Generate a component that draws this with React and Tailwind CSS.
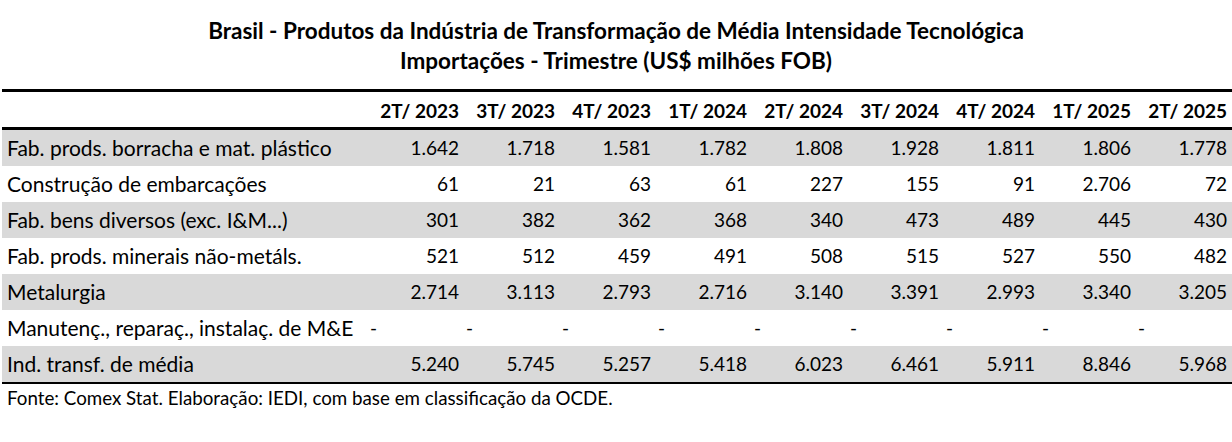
import React from 'react';

const periods = ['2T/ 2023', '3T/ 2023', '4T/ 2023', '1T/ 2024', '2T/ 2024', '3T/ 2024', '4T/ 2024', '1T/ 2025', '2T/ 2025'];

const rows = [
    { label: 'Fab. prods. borracha e mat. plástico', values: ['1.642', '1.718', '1.581', '1.782', '1.808', '1.928', '1.811', '1.806', '1.778'] },
    { label: 'Construção de embarcações', values: ['61', '21', '63', '61', '227', '155', '91', '2.706', '72'] },
    { label: 'Fab. bens diversos (exc. I&M...)', values: ['301', '382', '362', '368', '340', '473', '489', '445', '430'] },
    { label: 'Fab. prods. minerais não-metáls.', values: ['521', '512', '459', '491', '508', '515', '527', '550', '482'] },
    { label: 'Metalurgia', values: ['2.714', '3.113', '2.793', '2.716', '3.140', '3.391', '2.993', '3.340', '3.205'] },
    { label: 'Manutenç., reparaç., instalaç. de M&E', values: ['-', '-', '-', '-', '-', '-', '-', '-', '-'] },
    { label: 'Ind. transf. de média', values: ['5.240', '5.745', '5.257', '5.418', '6.023', '6.461', '5.911', '8.846', '5.968'] },
];

const App = () => {
    return (
        <div className="w-[1232px] h-[442px] bg-white text-black font-['Lato',sans-serif]">
            <div className="pt-[16px] h-[89px] text-center text-[22.5px] font-bold leading-[30px]">
                <p>Brasil - Produtos da Indústria de Transformação de Média Intensidade Tecnológica</p>
                <p>Importações - Trimestre (US$ milhões FOB)</p>
            </div>
            <div className="ml-[2px] w-[1230px] border-t-[3px] border-black">
                <div className="grid grid-cols-[366px_repeat(9,96px)] h-[38px] pt-[3px] items-center border-b-[3px] border-black text-[19px] font-bold">
                    <div></div>
                    {periods.map(p => (
                        <div key={p} className="text-right pr-[5px]">{p}</div>
                    ))}
                </div>
                {rows.map((row, i) => (
                    <div
                        key={row.label}
                        className={`grid grid-cols-[366px_repeat(9,96px)] h-[36px] items-center text-[19px] ${i % 2 === 0 ? 'bg-[#d9d9d9]' : 'bg-white'}`}
                    >
                        <div className="pl-[5px] whitespace-nowrap text-[21px]">{row.label}</div>
                        {row.values.map((v, j) => (
                            v === '-' ? (
                                <div key={j} className="text-left pl-[2px]">-</div>
                            ) : (
                                <div key={j} className="text-right pr-[5px]">{v}</div>
                            )
                        ))}
                    </div>
                ))}
                <div className="border-t-[2px] border-black"></div>
            </div>
            <p className="pl-[7px] text-[18.75px]">Fonte: Comex Stat. Elaboração: IEDI, com base em classificação da OCDE.</p>
        </div>
    );
};

export default App;
